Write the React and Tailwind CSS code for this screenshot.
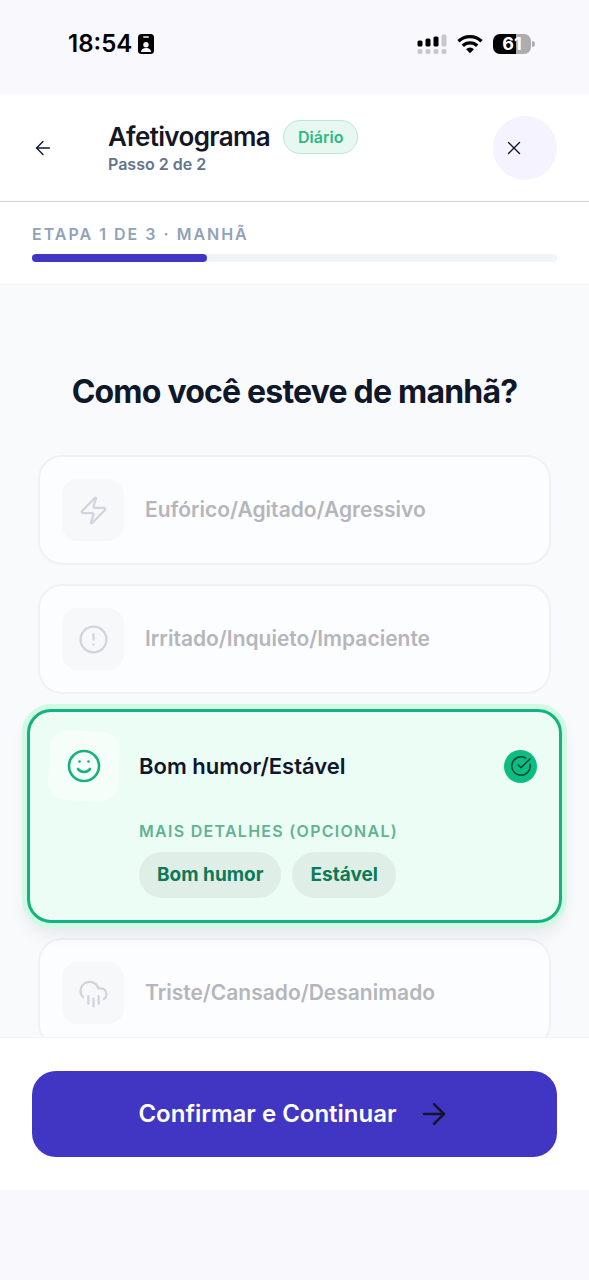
import { useState } from "react";
import {
  ArrowLeft,
  ArrowRight,
  CircleAlert,
  CircleCheckBig,
  CloudRain,
  Smile,
  X,
  Zap,
} from "lucide-react";

const MOODS = [
  { id: "euforico", label: "Eufórico/Agitado/Agressivo", icon: Zap, details: [] },
  { id: "irritado", label: "Irritado/Inquieto/Impaciente", icon: CircleAlert, details: [] },
  { id: "estavel", label: "Bom humor/Estável", icon: Smile, details: ["Bom humor", "Estável"] },
  { id: "triste", label: "Triste/Cansado/Desanimado", icon: CloudRain, details: [] },
];

function StatusBar() {
  return (
    <div className="flex h-[94px] shrink-0 items-center justify-between pr-[54px] pb-[6px] pl-[68px] text-black">
      <div className="flex items-center gap-[6px]">
        <span className="text-[24px] leading-7 font-semibold">18:54</span>
        <svg viewBox="0 0 16 20" className="h-5 w-4">
          <rect width="16" height="20" rx="3.5" fill="#000" />
          <rect x="5" y="2.2" width="6" height="1.6" rx="0.8" fill="#f8f8fd" />
          <circle cx="8" cy="10.8" r="2.7" fill="#f8f8fd" />
          <path d="M3 18c0-2.8 2.2-4 5-4s5 1.2 5 4z" fill="#f8f8fd" />
        </svg>
      </div>
      <div className="flex items-center gap-[10px]">
        <svg viewBox="0 0 30 20" className="h-5 w-[30px]">
          <g fill="#000">
            <rect x="0.5" y="6.5" width="5" height="6" rx="1.5" />
            <rect x="8.5" y="4.5" width="5" height="8" rx="1.5" />
            <rect x="16.5" y="2.5" width="5" height="10" rx="1.5" />
          </g>
          <g fill="#c8c8cc">
            <rect x="24.5" y="0.5" width="5" height="12" rx="1.5" />
            <rect x="0.5" y="15" width="5" height="5" rx="1.8" />
            <rect x="8.5" y="15" width="5" height="5" rx="1.8" />
            <rect x="16.5" y="15" width="5" height="5" rx="1.8" />
            <rect x="24.5" y="15" width="5" height="5" rx="1.8" />
          </g>
        </svg>
        <svg viewBox="0 0 26 20" className="h-5 w-[26px]" fill="none" stroke="#000" strokeWidth="3.4">
          <path d="M1.5 7.3a16.5 16.5 0 0 1 23 0" />
          <path d="M5.8 11.8a10.3 10.3 0 0 1 14.4 0" />
          <path d="M13 19.2l-3.9-4a5.6 5.6 0 0 1 7.8 0z" fill="#000" stroke="none" />
        </svg>
        <div className="flex items-center gap-px">
          <div className="flex h-5 w-[38px] items-center justify-center rounded-[7px] bg-linear-to-r from-black from-61% to-[#adadb0] to-61% text-[18px] leading-5 font-bold text-white">
            61
          </div>
          <div className="h-[6px] w-[3px] rounded-r-full bg-[#adadb0]" />
        </div>
      </div>
    </div>
  );
}

function Header() {
  return (
    <header className="flex h-[108px] shrink-0 items-center border-b border-slate-300 bg-white px-8">
      <button aria-label="Voltar" className="flex w-[76px] shrink-0 items-center text-slate-900">
        <ArrowLeft className="size-[22px]" strokeWidth={1.5} />
      </button>
      <div className="flex-1 pb-0.5">
        <div className="flex items-center gap-[13px]">
          <h1 className="text-[26px] leading-8 font-semibold tracking-tight text-[#141625]">Afetivograma</h1>
          <span className="rounded-full border border-[#b9e8d5] bg-[#e7f8f1] px-[14px] py-[6px] text-[16px] leading-5 font-semibold text-[#2bb985]">
            Diário
          </span>
        </div>
        <p className="text-[16px] leading-5 font-semibold text-slate-500">Passo 2 de 2</p>
      </div>
      <button
        aria-label="Fechar"
        className="flex size-16 shrink-0 items-center rounded-full bg-[#f5f3ff] pl-[10px] text-slate-900"
      >
        <X className="size-[22px]" strokeWidth={1.5} />
      </button>
    </header>
  );
}

function StepProgress({ step, total, label }) {
  return (
    <div className="shrink-0 border-b border-slate-100 bg-white px-8 pt-[22px] pb-[22px]">
      <div className="text-[16px] leading-5 font-semibold tracking-[2px] text-slate-400 uppercase">
        Etapa {step} de {total} · {label}
      </div>
      <div className="mt-[10px] h-2 rounded-full bg-slate-100">
        <div className="h-2 rounded-full bg-[#4136c4]" style={{ width: `${(step / total) * 100}%` }} />
      </div>
    </div>
  );
}

function MoodCard({ mood, onSelect }) {
  const Icon = mood.icon;

  return (
    <button
      onClick={onSelect}
      className="mx-[38px] flex h-[110px] shrink-0 items-center gap-[21px] rounded-[24px] border-2 border-[#f0f1f4] bg-[#fcfdfe] px-[22px] text-left"
    >
      <span className="flex size-[62px] items-center justify-center rounded-[16px] bg-[#f7f8fa] text-[#d1d4da]">
        <Icon className="size-[31px]" strokeWidth={1.75} />
      </span>
      <span className="text-[21px] leading-7 font-semibold text-[#b4b6bc]">{mood.label}</span>
    </button>
  );
}

function SelectedMoodCard({ mood }) {
  const [picked, setPicked] = useState([]);
  const Icon = mood.icon;

  function toggle(name) {
    setPicked((prev) =>
      prev.includes(name) ? prev.filter((p) => p !== name) : [...prev, name]
    );
  }

  return (
    <div className="z-10 mx-[27px] -my-1 shrink-0 rounded-[24px] border-3 border-[#14b37d] bg-[#ebfdf5] px-[19px] pt-[19px] pb-[22px] shadow-[0_0_0_5px_#d1fae5,0_10px_18px_0_rgba(15,23,42,0.09)]">
      <div className="flex items-center">
        <span className="flex size-[70px] shrink-0 rotate-3 items-center justify-center rounded-[18px] bg-[#f6fefa] text-[#14b37d]">
          <Icon className="size-9 -rotate-3" strokeWidth={1.75} />
        </span>
        <span className="ml-[20px] flex-1 text-[22px] leading-7 font-semibold text-slate-900">
          {mood.label}
        </span>
        <span className="mr-[3px] flex size-[33px] items-center justify-center rounded-full bg-[#0bbd80] text-[#0b3a33]">
          <CircleCheckBig className="size-[22px]" strokeWidth={1.5} />
        </span>
      </div>
      {mood.details.length > 0 && (
        <div className="mt-[20px] ml-[90px]">
          <div className="text-[16px] leading-5 font-semibold tracking-[0.08em] text-[#63b294] uppercase">
            Mais detalhes (opcional)
          </div>
          <div className="mt-[11px] flex gap-[11px]">
            {mood.details.map((name) => (
              <button
                key={name}
                onClick={() => toggle(name)}
                aria-pressed={picked.includes(name)}
                className="h-[46px] rounded-full bg-[#e0eee8] px-[18px] text-[19px] leading-6 font-bold text-[#0c7a55]"
              >
                {name}
              </button>
            ))}
          </div>
        </div>
      )}
    </div>
  );
}

export default function App() {
  const [selected, setSelected] = useState("estavel");

  return (
    <div className="flex h-screen flex-col overflow-hidden bg-[#f8f8fd] font-['Inter',sans-serif]">
      <StatusBar />
      <Header />
      <StepProgress step={1} total={3} label="Manhã" />

      <main className="flex min-h-0 flex-1 flex-col gap-[19px] overflow-hidden bg-[#f9fafc]">
        <h2 className="shrink-0 pt-[87px] pb-6 text-center text-[32px] leading-10 font-bold tracking-tight text-slate-900">
          Como você esteve de manhã?
        </h2>
        {MOODS.map((mood) =>
          mood.id === selected ? (
            <SelectedMoodCard key={mood.id} mood={mood} />
          ) : (
            <MoodCard key={mood.id} mood={mood} onSelect={() => setSelected(mood.id)} />
          )
        )}
      </main>

      <footer className="shrink-0 border-t border-slate-100 bg-white px-8 pt-[33px] pb-[33px]">
        <button className="flex h-[86px] w-full items-center justify-center gap-5 rounded-[24px] bg-[#4136c4]">
          <span className="text-[24px] leading-8 font-semibold text-white">Confirmar e Continuar</span>
          <ArrowRight className="size-[34px] text-[#14142b]" strokeWidth={1.75} />
        </button>
      </footer>
      <div className="h-[90px] shrink-0" />
    </div>
  );
}
